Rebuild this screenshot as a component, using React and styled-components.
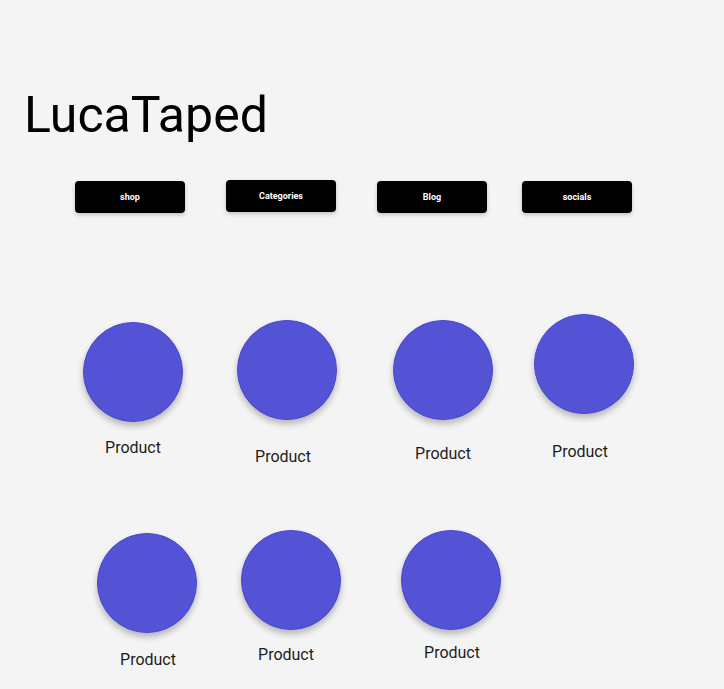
import React from 'react'
import styled, { createGlobalStyle } from 'styled-components'

const GlobalStyle = createGlobalStyle`
  html, body {
    margin: 0;
    padding: 0;
    background: #f4f4f4;
    font-family: Roboto, "Liberation Sans", sans-serif;
  }
`

const navItems = [
    { label: 'shop', left: 75, top: 1 },
    { label: 'Categories', left: 41, top: 0 },
    { label: 'Blog', left: 41, top: 1 },
    { label: 'socials', left: 35, top: 1 },
]

const rows = [
    {
        top: 101,
        items: [
            { left: 83, top: 8, gap: 16, shift: 0 },
            { left: 54, top: 6, gap: 27, shift: -4 },
            { left: 56, top: 6, gap: 24, shift: 0 },
            { left: 41, top: 0, gap: 28, shift: -4 },
        ],
    },
    {
        top: 63,
        items: [
            { left: 97, top: 3, gap: 17, shift: 1 },
            { left: 44, top: 0, gap: 15, shift: -5 },
            { left: 60, top: 0, gap: 13, shift: 1 },
        ],
    },
]

export default function App() {
    return (
        <Page>
            <GlobalStyle />
            <Title>LucaTaped</Title>
            <Nav>
                {navItems.map((n) => (
                    <NavButton key={n.label} $left={n.left} $top={n.top}>{n.label}</NavButton>
                ))}
            </Nav>
            {rows.map((row, i) => (
                <Row key={i} $top={row.top}>
                    {row.items.map((p, j) => (
                        <Product key={j} $left={p.left} $top={p.top}>
                            <Circle />
                            <Label $gap={p.gap} $shift={p.shift}>Product</Label>
                        </Product>
                    ))}
                </Row>
            ))}
        </Page>
    )
}

const Page = styled.div`
    width: 724px;
    min-height: 689px;
    padding-top: 83px;
    box-sizing: border-box;
`

const Title = styled.h1`
    margin: 0;
    padding-left: 24px;
    font-size: 50px;
    line-height: 64px;
    font-weight: 400;
    color: #000;
`

const Nav = styled.nav`
    display: flex;
    align-items: flex-start;
    margin-top: 33px;
`

const NavButton = styled.button`
    width: 110px;
    height: 32px;
    margin-left: ${(p) => p.$left}px;
    margin-top: ${(p) => p.$top}px;
    border: none;
    border-radius: 4px;
    background: #000;
    color: #fff;
    font-family: Roboto, "Liberation Sans", sans-serif;
    font-size: 9px;
    font-weight: 700;
    box-shadow: 0 2px 4px rgba(0, 0, 0, 0.2);
    cursor: pointer;
`

const Row = styled.div`
    display: flex;
    align-items: flex-start;
    margin-top: ${(p) => p.$top}px;
`

const Product = styled.div`
    display: flex;
    flex-direction: column;
    align-items: center;
    width: 100px;
    margin-left: ${(p) => p.$left}px;
    margin-top: ${(p) => p.$top}px;
`

const Circle = styled.div`
    width: 100px;
    height: 100px;
    box-sizing: border-box;
    border-radius: 50%;
    background: #5553d5;
    border: 1px solid #4947cf;
    box-shadow: 0 4px 6px rgba(0, 0, 0, 0.25);
`

const Label = styled.span`
    margin-top: ${(p) => p.$gap}px;
    margin-left: ${(p) => (p.$shift > 0 ? p.$shift * 2 : 0)}px;
    margin-right: ${(p) => (p.$shift < 0 ? -p.$shift * 2 : 0)}px;
    font-size: 16px;
    line-height: 20px;
    color: #1c1c1c;
    white-space: nowrap;
`
